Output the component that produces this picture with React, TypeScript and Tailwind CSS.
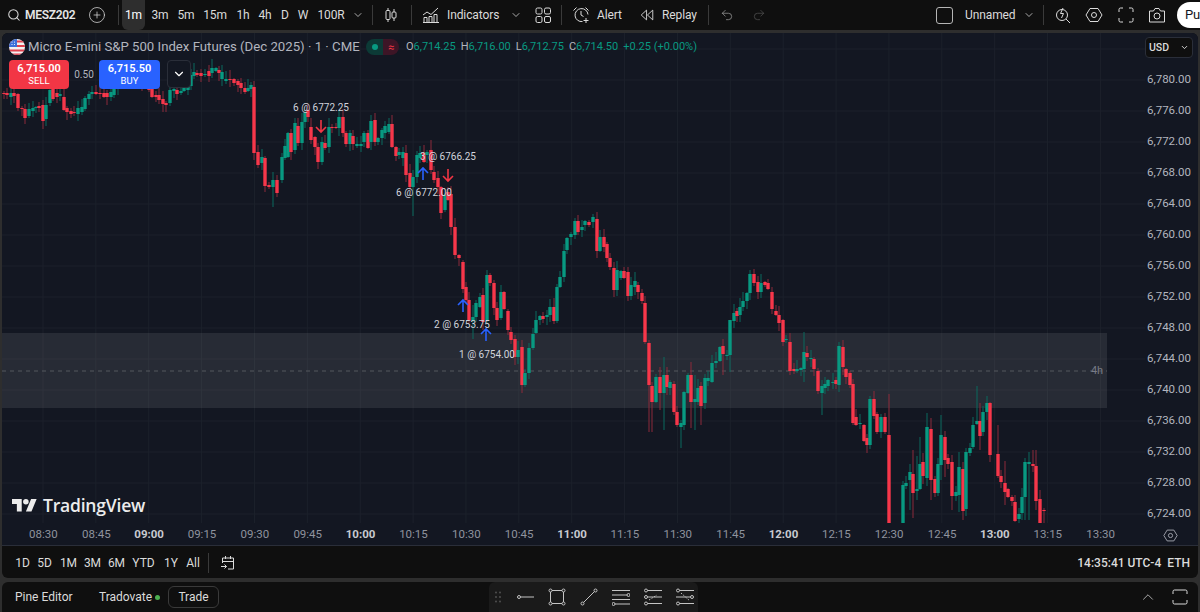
import { ChevronDown, ChevronUp, CirclePlus, Redo2, Search, Undo2 } from "lucide-react";

// [x, top, bottom, 1 = red] in page pixels
const candles: number[][] = [
  [4,93,94,1],[7,93,95,1],[11,93,97,0],[14,93,96,1],[18,94,108,1],[22,108,109,1],[25,109,118,1],[29,109,116,0],[33,108,111,0],[36,107,108,0],[39,106,108,1],[43,105,121,1],[46,105,119,0],[50,90,103,0],[53,88,99,1],[57,93,97,1],[60,94,96,0],[64,97,110,1],[67,108,112,1],[71,111,114,1],[74,112,113,1],[78,108,114,0],[82,107,112,0],[85,98,109,0],[89,94,99,0],[92,92,94,0],[96,92,94,1],[100,93,94,1],[104,93,97,1],[107,93,97,1],[111,92,97,0],[114,85,95,0],[118,82,88,0],[122,80,84,1],[126,76,82,0],[130,75,79,1],[134,74,78,0],[138,74,80,1],[142,76,84,1],[146,80,86,1],[149,82,90,1],
  [152,88,97,1],[156,95,97,1],[159,95,100,1],[163,99,104,1],[166,103,105,1],[170,90,103,0],[174,89,91,0],[177,90,94,1],[181,91,93,0],[184,88,91,0],[188,85,90,0],[191,75,86,0],[194,72,76,0],[197,73,75,1],[201,73,76,1],[205,74,75,0],[209,71,76,1],[212,68,73,0],[216,68,71,0],[219,70,73,1],[222,72,79,0],[226,79,81,0],[230,79,80,1],[234,79,83,1],[238,81,85,1],[241,83,88,1],[245,88,92,1],[248,88,91,0],[251,85,89,0],[254,87,153,1],
  [258,152,165,1],[262,157,163,0],[265,158,186,1],[269,185,187,1],[273,180,187,0],[277,180,193,1],[282,157,180,0],[285,146,158,0],[288,133,157,0],[291,133,152,1],[295,123,150,0],[298,126,143,1],[302,122,143,0],[305,113,122,0],[308,110,117,1],[311,127,140,1],[315,137,147,1],[318,147,162,1],[322,142,162,0],[325,143,148,1],[329,127,147,0],[332,127,128,1],[336,127,128,1],[339,117,128,0],[343,117,133,1],[346,133,144,1],[350,133,144,0],[353,136,144,1],[357,144,146,0],[361,144,146,0],[364,133,142,0],[368,133,148,1],[371,121,142,0],[375,120,142,1],[378,138,142,0],[382,130,138,0],[385,126,133,0],[389,124,132,0],[392,124,147,1],[396,147,156,1],[399,152,155,0],[403,152,158,0],[406,153,175,1],[410,173,187,1],[413,177,187,0],[417,155,177,0],[420,153,158,0],[424,153,162,1],[427,152,155,0],[431,150,170,1],[434,172,180,1],[438,178,187,1],[441,187,213,1],[445,195,210,0],[448,192,200,1],[451,194,227,1],
  [455,227,255,1],[459,255,258,1],[463,262,289,1],[466,287,300,1],[469,300,321,1],[473,317,321,0],[476,303,317,0],[480,297,307,0],[483,295,322,1],[487,275,320,0],[490,275,283,1],[494,283,308,1],[497,308,320,1],[501,292,318,0],[504,292,309,1],[508,311,330,1],[511,332,340,1],[515,339,357,1],[518,350,357,0],[522,347,385,1],[525,373,385,0],[529,348,373,0],[533,334,348,0],[536,320,333,0],[540,316,320,0],[543,316,319,1],[547,315,317,0],[550,307,315,0],[554,307,321,1],[557,287,321,0],[560,277,287,0],[564,251,277,0],[567,238,250,0],[571,234,237,0],[575,221,235,0],[578,221,232,1],[582,227,230,0],[585,221,225,0],[589,222,225,1],[593,217,222,0],[597,219,251,1],[600,237,251,0],[604,237,247,1],[607,244,258,1],[610,258,267,1],[614,268,290,1],[617,270,290,0],[621,271,278,0],[624,271,278,1],[628,272,296,1],[631,285,296,0],[635,281,287,0],[638,285,292,1],
  [642,293,301,1],[645,303,342,1],[649,343,385,1],[652,386,402,1],[656,377,402,0],[660,377,393,1],[664,375,393,0],[667,375,387,1],[670,382,388,0],[674,384,412,1],[677,412,425,1],[681,423,427,0],[684,392,425,0],[688,375,393,0],[691,375,402,1],[695,399,402,0],[698,388,402,0],[701,386,406,1],[705,378,403,0],[708,378,381,0],[712,363,382,0],[716,361,363,0],[720,347,361,0],[723,346,354,1],[727,355,356,0],[730,320,355,0],[734,313,321,0],[737,311,316,1],[740,307,315,0],[743,301,307,0],[747,293,301,0],[750,274,293,0],[754,274,283,1],[758,282,292,1],[761,283,292,0],[765,282,285,1],[768,283,289,1],[772,292,309,1],[776,311,315,1],[779,315,323,1],[783,320,342,1],[786,339,340,0],[790,342,371,1],[794,369,371,1],[797,369,371,0],[801,368,370,0],[804,352,369,0],[807,353,357,1],[811,358,359,0],[814,359,369,1],[818,371,391,1],[822,386,393,0],[825,384,388,0],[828,380,386,0],[833,382,383,0],[836,380,384,1],[839,346,385,0],[843,347,367,1],[846,369,377,1],[850,373,385,1],[853,384,423,1],[856,417,425,1],[860,423,424,0],[864,425,441,1],[867,438,445,1],[870,399,445,0],[874,399,416,1],[877,414,432,1],[881,417,432,0],[885,417,432,1],[889,435,523,1],
  [903,485,523,0],[906,483,486,0],[910,472,480,0],[913,474,493,1],[917,489,491,0],[920,464,489,0],[923,462,476,1],[927,427,478,0],[931,429,480,1],[935,479,493,1],[938,464,493,0],[941,435,465,0],[945,437,460,1],[948,458,464,1],[952,462,496,1],[956,492,496,0],[959,467,495,0],[963,469,511,1],[966,452,509,0],[970,448,453,0],[973,425,447,0],[977,421,424,0],[980,421,436,1],[983,412,432,0],[987,403,412,0],[990,403,455,1],[998,454,476,1],[1001,476,482,1],[1005,483,492,1],[1008,489,497,1],[1012,497,501,1],[1015,502,521,1],[1019,514,519,0],[1022,497,513,0],[1025,462,497,0],[1029,462,464,0],[1033,464,466,1],[1036,466,501,1],[1040,499,523,1],[1044,510,511,1],
];

// wicks that stick out further than the generated ones
const longWicks: Record<number, number[]> = {
  273: [172, 207], 277: [175, 197], 366: [116, 146], 413: [170, 216], 431: [140, 174], 473: [305, 339], 487: [270, 323], 515: [335, 365], 522: [340, 393], 597: [212, 258], 649: [340, 432], 652: [382, 432], 660: [367, 410], 664: [357, 430], 681: [420, 448], 691: [362, 428], 695: [375, 430], 701: [382, 425], 723: [339, 375], 730: [335, 372], 740: [298, 322], 790: [333, 375], 804: [332, 382], 822: [380, 415], 839: [342, 392], 870: [396, 449], 889: [394, 523], 913: [450, 518], 910: [464, 510], 917: [456, 500], 920: [437, 490], 927: [413, 486], 931: [418, 500], 941: [415, 480], 945: [431, 477], 952: [455, 510], 959: [452, 512], 963: [462, 520], 977: [386, 425], 980: [403, 450], 998: [425, 478], 1005: [461, 505], 1015: [495, 522], 1025: [458, 520], 1029: [452, 520], 1033: [450, 472], 1036: [450, 510], 1044: [508, 523],
};

function wick(c: number[]) {
  const [x, top, bottom] = c;
  const over = longWicks[x];
  if (over) return over;
  return [top - 1 - ((x * 7) % 9), Math.min(bottom + 1 + ((x * 13) % 8), 523)];
}

const priceRows = ["6,780.00", "6,776.00", "6,772.00", "6,768.00", "6,764.00", "6,760.00", "6,756.00", "6,752.00", "6,748.00", "6,744.00", "6,740.00", "6,736.00", "6,732.00", "6,728.00", "6,724.00"];
const timeRows = ["08:30", "08:45", "09:00", "09:15", "09:30", "09:45", "10:00", "10:15", "10:30", "10:45", "11:00", "11:15", "11:30", "11:45", "12:00", "12:15", "12:30", "12:45", "13:00", "13:15", "13:30"];

function TradeArrow({ x, y, up }: { x: number; y: number; up: boolean }) {
  const color = up ? "#2962ff" : "#f23645";
  const d = up ? `M${x} ${y - 6}V${y + 6}M${x - 5} ${y - 1}L${x} ${y - 6}L${x + 5} ${y - 1}` : `M${x} ${y - 6}V${y + 6}M${x - 5} ${y + 1}L${x} ${y + 6}L${x + 5} ${y + 1}`;
  return <path d={d} stroke={color} strokeWidth="1.6" fill="none" />;
}

function Chart() {
  return (
    <svg width="1143" height="490" viewBox="2 33 1143 490" className="block">
      {priceRows.map((_, i) => (
        <line key={i} x1="2" x2="1145" y1={80 + i * 31} y2={80 + i * 31} stroke="#1c212b" />
      ))}
      <line x1="2" x2="1145" y1="49" y2="49" stroke="#1c212b" />
      {timeRows.map((_, i) => (
        <line key={i} x1={43 + i * 52.87} x2={43 + i * 52.87} y1="33" y2="523" stroke="#1c212b" />
      ))}
      <rect x="2" y="333" width="1105" height="75" fill="#ffffff" fillOpacity="0.085" />
      <line x1="2" x2="1107" y1="371" y2="371" stroke="#55585f" strokeDasharray="4 4" />
      <text x="1097" y="374" textAnchor="middle" fontSize="11" fill="#787b86">4h</text>
      {candles.map((c) => {
        const [x, top, bottom, red] = c;
        const [w1, w2] = wick(c);
        return (
          <g key={x}>
            <line x1={x} x2={x} y1={w1} y2={w2} stroke={red ? "#8c2b3a" : "#0b6a5f"} strokeWidth="1" />
            <rect x={x - 1.7} y={top} width="3.4" height={Math.max(bottom - top, 1)} fill={red ? "#f7374a" : "#089981"} />
          </g>
        );
      })}
      <TradeArrow x={321} y={126} up={false} />
      <TradeArrow x={423} y={174} up />
      <TradeArrow x={448} y={175} up={false} />
      <TradeArrow x={463} y={306} up />
      <TradeArrow x={486} y={335} up />
      <g fontSize="10" fill="#d1d4dc" textAnchor="middle">
        <text x="321" y="111">6 @ 6772.25</text>
        <text x="448" y="160">3 @ 6766.25</text>
        <text x="424" y="196">6 @ 6772.00</text>
        <text x="462" y="328">2 @ 6753.75</text>
        <text x="487" y="358">1 @ 6754.00</text>
      </g>
    </svg>
  );
}

function Flag() {
  return (
    <svg width="16" height="16" viewBox="0 0 16 16" className="shrink-0">
      <clipPath id="flagclip"><circle cx="8" cy="8" r="8" /></clipPath>
      <g clipPath="url(#flagclip)">
        <rect width="16" height="16" fill="#f2f2f2" />
        <rect y="1.5" width="16" height="2" fill="#e0414f" />
        <rect y="6" width="16" height="2" fill="#e0414f" />
        <rect y="10.5" width="16" height="2" fill="#e0414f" />
        <rect y="14.5" width="16" height="2" fill="#e0414f" />
        <rect width="8" height="8" fill="#3c6fd8" />
        <circle cx="3" cy="3" r="0.6" fill="#fff" />
        <circle cx="5.5" cy="3" r="0.6" fill="#fff" />
        <circle cx="3" cy="5.5" r="0.6" fill="#fff" />
        <circle cx="5.5" cy="5.5" r="0.6" fill="#fff" />
      </g>
    </svg>
  );
}

function Legend() {
  return (
    <div className="absolute left-[7px] top-[5px] flex h-[18px] items-center whitespace-nowrap">
      <Flag />
      <span className="ml-[3px] w-[331px] shrink-0 text-[13.2px] text-[#b2b5be]">Micro E-mini S&amp;P 500 Index Futures (Dec 2025) · 1 · CME</span>
      <div className="ml-[7px] flex h-[16px] w-[33px] shrink-0 overflow-hidden rounded-full">
        <span className="flex w-[17px] items-center justify-center bg-[#0c3a36]"><span className="h-[6px] w-[6px] rounded-full bg-[#089981]" /></span>
        <span className="flex w-[16px] items-center justify-center bg-[#3d1526] text-[11px] leading-none text-[#f23645]">≈</span>
      </div>
      <div className="ml-[7px] flex gap-[5px] text-[11px] text-[#089981]">
        <span><span className="text-[#b2b5be]">O</span>6,714.25</span>
        <span><span className="text-[#b2b5be]">H</span>6,716.00</span>
        <span><span className="text-[#b2b5be]">L</span>6,712.75</span>
        <span><span className="text-[#b2b5be]">C</span>6,714.50</span>
        <span>+0.25 (+0.00%)</span>
      </div>
    </div>
  );
}

function TradeButtons() {
  return (
    <div className="absolute left-[7px] top-[27px] flex items-start text-white">
      <div className="flex h-[29px] w-[60px] flex-col items-center justify-center rounded bg-[#f23645] leading-none">
        <span className="text-[11px] font-semibold">6,715.00</span>
        <span className="mt-[2px] text-[9.5px]">SELL</span>
      </div>
      <span className="flex h-[29px] w-[30px] items-center justify-center text-[10px] text-[#b2b5be]">0.50</span>
      <div className="flex h-[29px] w-[61px] flex-col items-center justify-center rounded bg-[#2962ff] leading-none">
        <span className="text-[11px] font-semibold">6,715.50</span>
        <span className="mt-[2px] text-[9.5px]">BUY</span>
      </div>
      <div className="ml-[7px] flex h-[28px] w-[24px] items-center justify-center rounded border border-[#2a2e39] bg-[#131722]">
        <ChevronDown size={14} />
      </div>
    </div>
  );
}

function Logo() {
  return (
    <div className="absolute left-[10px] top-[463px] flex items-center text-[#ececec]">
      <svg width="25" height="20" viewBox="0 0 36 28" fill="currentColor">
        <path d="M14 22H7V11H0V4h14v18zM28 22h-8l7.5-18h8L28 22z" />
        <circle cx="20" cy="8" r="4" />
      </svg>
      <span className="ml-[6px] text-[17.5px] font-semibold leading-none tracking-[-0.2px] [font-family:'Open_Sans',sans-serif]">TradingView</span>
    </div>
  );
}

function Sep({ className = "" }: { className?: string }) {
  return <span className={`h-[20px] w-px shrink-0 bg-[#3a3a3a] ${className}`} />;
}

function Svg({ children, size = 18, className = "" }: { children: React.ReactNode; size?: number; className?: string }) {
  return (
    <svg width={size} height={size} viewBox="0 0 18 18" fill="none" stroke="currentColor" strokeWidth="1" className={`shrink-0 ${className}`}>
      {children}
    </svg>
  );
}

function TopBar() {
  return (
    <div className="flex h-[30px] shrink-0 items-center whitespace-nowrap bg-[#0f0f0f] text-[12px] tracking-[-0.1px] text-[#dbdbdb] [&>*]:shrink-0">
      <span className="w-[25px] pl-[7px]"><Search size={14} strokeWidth={1.8} /></span>
      <span className="w-[52px] text-[12px] font-semibold tracking-[-0.3px] text-[#e6e6e6]">MESZ202</span>
      <CirclePlus size={18} strokeWidth={1} className="ml-[11px]" />
      <Sep className="ml-[12px]" />
      <span className="ml-[3px] flex h-[30px] w-[23px] items-center justify-center rounded-b-md bg-[#2e2e2e] text-white">1m</span>
      <span className="w-[30px] text-center">3m</span>
      <span className="w-[22px] text-center">5m</span>
      <span className="w-[36px] text-center">15m</span>
      <span className="w-[20px] text-center">1h</span>
      <span className="w-[24px] text-center">4h</span>
      <span className="w-[16px] text-center">D</span>
      <span className="w-[20px] text-center">W</span>
      <span className="w-[36px] text-center">100R</span>
      <span className="flex w-[18px] justify-center"><ChevronDown size={12} strokeWidth={1.5} /></span>
      <Sep className="ml-[5px]" />
      <span className="flex w-[36px] justify-center">
        <Svg>
          <path d="M6 2v2.5M6 13.500v2.500M12 3v3M12 12v3" />
          <rect x="4" y="4.500" width="4" height="9" rx="1" />
          <rect x="10" y="6" width="4" height="6" rx="1" />
        </Svg>
      </span>
      <Sep className="ml-[2px]" />
      <Svg className="ml-[10px]">
        <path d="M1 9l4-3 4 2.500L16 2" />
        <path d="M2 16.500v-5h3v5M7 16.500v-6h3v6M12 16.500v-8h3v8M1 16.500h16" />
      </Svg>
      <span className="ml-[7px] w-[51px]">Indicators</span>
      <span className="ml-[11px] flex w-[14px] justify-center"><ChevronDown size={12} strokeWidth={1.5} /></span>
      <Svg className="ml-[11px]">
        <rect x="2" y="2" width="6" height="6" rx="1.500" />
        <rect x="10.500" y="2" width="6" height="6" rx="1.500" />
        <rect x="2" y="10.500" width="6" height="6" rx="1.500" />
        <rect x="10.500" y="10.500" width="6" height="6" rx="1.500" />
      </Svg>
      <Sep className="ml-[9px]" />
      <Svg className="ml-[10px]">
        <path d="M16 8.500a6.500 6.500 0 1 0-5.500 7M9 5v4l2.500 1.500M1.500 4.500l3-3M13.500 1.500l3 3M14 12v5M11.500 14.500h5" />
      </Svg>
      <span className="ml-[7px] w-[25px]">Alert</span>
      <Svg size={16} className="ml-[17px]">
        <path d="M8.500 3.500L2.500 9l6 5.500zM15.500 3.500L9.500 9l6 5.500z" />
      </Svg>
      <span className="ml-[7px] w-[34px]">Replay</span>
      <Sep className="ml-[12px]" />
      <Undo2 size={14} strokeWidth={1.2} className="ml-[11px] text-[#a3a3a3]" />
      <Redo2 size={14} strokeWidth={1.2} className="ml-[18px] text-[#555555]" />
      <span className="ml-[170px] h-[17px] w-[17px] rounded-[3px] border border-[#b5b5b5]" />
      <span className="ml-[12px] w-[48px]">Unnamed</span>
      <span className="ml-[9px] flex w-[14px] justify-center"><ChevronDown size={12} strokeWidth={1.5} /></span>
      <Sep className="ml-[7px]" />
      <Svg className="ml-[10px]">
        <circle cx="8" cy="9" r="5.500" />
        <path d="M12 13l4 4M9 2L6.500 7.500h3L7.500 12" />
      </Svg>
      <Svg className="ml-[13px]">
        <path d="M5 2.500h8L17 9l-4 6.500H5L1 9z" />
        <circle cx="9" cy="9" r="2.500" />
      </Svg>
      <Svg className="ml-[14px]">
        <path d="M2 6V3.500A1.500 1.500 0 0 1 3.500 2H6M12 2h2.500A1.500 1.500 0 0 1 16 3.500V6M16 12v2.500a1.500 1.500 0 0 1-1.500 1.500H12M6 16H3.500A1.500 1.500 0 0 1 2 14.500V12" />
      </Svg>
      <Svg className="ml-[13px]">
        <path d="M1.500 5h4l1.500-2.500h4L12.500 5h4v11h-15z" />
        <circle cx="9" cy="10" r="3" />
      </Svg>
      <span className="ml-[11px] flex h-[26px] w-[70px] items-center rounded-full bg-white pl-[8px] text-[13px] text-[#131722]">Publish</span>
    </div>
  );
}

function RangeBar() {
  return (
    <div className="flex h-[32px] items-center whitespace-nowrap pr-[8px] pt-[1px] text-[12px] text-[#dbdbdb]">
      <span className="w-[31px] pl-[10px] text-center">1D</span>
      <span className="w-[23px] text-center">5D</span>
      <span className="w-[25px] text-center">1M</span>
      <span className="w-[23px] text-center">3M</span>
      <span className="w-[25px] text-center">6M</span>
      <span className="w-[29px] text-center">YTD</span>
      <span className="w-[26px] text-center">1Y</span>
      <span className="w-[18px] text-center">All</span>
      <Sep className="ml-[6px]" />
      <Svg className="ml-[10px]">
        <path d="M3.500 9V4h11v11H9M14.500 7.500h-11M6.500 2v3M11.500 2v3M2 12.500h5.500M5.500 10.500l2 2-2 2" />
      </Svg>
      <span className="ml-auto w-[80px] font-medium">14:35:41 UTC-4</span>
      <span className="ml-[10px] font-medium">ETH</span>
    </div>
  );
}

function DrawingTools() {
  return (
    <div className="ml-[270px] flex h-[30px] w-[209px] shrink-0 items-center rounded-t-md bg-[#1a1a1a] text-[#c4c4c4]">
      <svg width="6" height="12" viewBox="0 0 6 12" className="ml-[6px] shrink-0 fill-[#555555]">
        <circle cx="1" cy="1.500" r="0.900" /><circle cx="5" cy="1.500" r="0.900" />
        <circle cx="1" cy="6" r="0.900" /><circle cx="5" cy="6" r="0.900" />
        <circle cx="1" cy="10.500" r="0.900" /><circle cx="5" cy="10.500" r="0.900" />
      </svg>
      <Svg className="ml-[15px]"><circle cx="3" cy="9" r="1.500" /><path d="M4.500 9H18" /></Svg>
      <Svg className="ml-[14px]">
        <path d="M4 2.500h10M2.500 4v10M15.500 4v10M4 15.500h10" />
        <circle cx="2.500" cy="2.500" r="1.500" /><circle cx="15.500" cy="2.500" r="1.500" /><circle cx="2.500" cy="15.500" r="1.500" /><circle cx="15.500" cy="15.500" r="1.500" />
      </Svg>
      <Svg className="ml-[14px]"><circle cx="2.500" cy="15.500" r="1.500" /><circle cx="15.500" cy="2.500" r="1.500" /><path d="M3.500 14.500l11-11" /></Svg>
      <Svg className="ml-[14px]"><path d="M0 2.500h18M0 7h15M0 11.500h18M3 16h15" /><circle cx="16.500" cy="7" r="1.500" /><circle cx="1.500" cy="16" r="1.500" /></Svg>
      <Svg className="ml-[14px]"><circle cx="2" cy="2.500" r="1.500" /><path d="M3.500 2.500H18M3.500 9H18M3.500 15.500H18" /><circle cx="2" cy="9" r="1.500" /><circle cx="2" cy="15.500" r="1.500" /><path d="M5 12l8-5" strokeDasharray="1.500 1.500" /></Svg>
      <Svg className="ml-[14px]"><circle cx="2" cy="2.500" r="1.500" /><circle cx="16" cy="9" r="1.500" /><path d="M3.500 2.500H18M0 9h14.500M3.500 15.500H18" /><circle cx="2" cy="15.500" r="1.500" /><path d="M5 5l9 8" strokeDasharray="1.500 1.500" /></Svg>
    </div>
  );
}

function BottomBar() {
  return (
    <div className="mx-[2px] mt-[4px] flex h-[30px] shrink-0 items-center whitespace-nowrap rounded-t-md bg-[#0f0f0f] text-[12px] text-[#dbdbdb] [&>*]:shrink-0">
      <span className="ml-[13px] w-[58px]">Pine Editor</span>
      <span className="ml-[26px] w-[53px]">Tradovate</span>
      <span className="ml-[3px] h-[5px] w-[5px] rounded-full bg-[#4caf50]" />
      <span className="ml-[8px] flex h-[22px] w-[51px] items-center justify-center rounded-md border border-[#3a3a3a]">Trade</span>
      <DrawingTools />
      <ChevronUp size={18} strokeWidth={1} className="ml-[441px]" />
      <Svg className="ml-[14px]">
        <path d="M2 6V3.500A1.500 1.500 0 0 1 3.500 2h11A1.500 1.500 0 0 1 16 3.500V6M16 12v2.500a1.500 1.500 0 0 1-1.500 1.500h-11A1.500 1.500 0 0 1 2 14.500V12" />
      </Svg>
    </div>
  );
}

export default function App() {
  return (
    <div className="flex h-[612px] w-[1200px] flex-col overflow-hidden bg-[#2e2e2e] [font-family:Roboto,sans-serif]">
      <TopBar />
      <div className="mx-[2px] mt-[3px] flex h-[545px] shrink-0 flex-col overflow-hidden rounded-md bg-[#0f0f0f]">
        <div className="flex h-[490px] shrink-0 bg-[#131722]">
          <div className="relative w-[1143px] shrink-0">
            <Chart />
            <Legend />
            <TradeButtons />
            <Logo />
          </div>
          <div className="flex flex-1 flex-col items-center overflow-hidden pr-[5px] pt-[4px] text-[11.5px] text-[#b2b5be]">
            <div className="flex h-[21px] w-[48px] shrink-0 items-center justify-between rounded border border-[#2a2e39] bg-[#0f0f0f] px-[3px] text-[10.5px] font-medium text-[#dbdbdb]">
              USD
              <ChevronDown size={9} strokeWidth={2.5} />
            </div>
            <div className="mt-[6px] flex shrink-0 flex-col">
              {priceRows.map((p) => (
                <span key={p} className="flex h-[31px] items-center">{p}</span>
              ))}
            </div>
          </div>
        </div>
        <div className="flex h-[23px] shrink-0 items-center border-b border-[#2a2e39] bg-[#131722] pl-[15px] pt-[2px] text-[11.5px] text-[#8f939e]">
          {timeRows.map((t) => (
            <span key={t} className={`w-[52.87px] shrink-0 text-center ${t.endsWith(":00") ? "font-bold text-[#c8cad0]" : ""}`}>{t}</span>
          ))}
          <Svg size={15} className="ml-[36px] text-[#b2b5be]">
            <path d="M5 2.500h8L17 9l-4 6.500H5L1 9z" />
            <circle cx="9" cy="9" r="2.500" />
          </Svg>
        </div>
        <RangeBar />
      </div>
      <BottomBar />
    </div>
  );
}
